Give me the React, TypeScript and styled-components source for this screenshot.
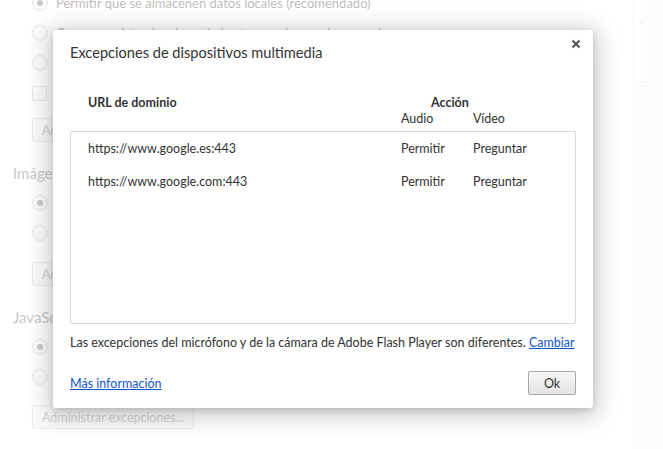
import React from "react";
import styled, { createGlobalStyle } from "styled-components";

const GlobalStyle = createGlobalStyle`
  html, body {
    margin: 0;
    padding: 0;
    width: 663px;
    height: 449px;
    overflow: hidden;
    background: #fff;
    font-family: "Lato", "Open Sans", "DejaVu Sans", sans-serif;
  }
`;

const Page = styled.div`
  display: flex;
  width: 663px;
  height: 449px;
  position: relative;
  overflow: hidden;
`;

const Settings = styled.div`
  flex: 1;
  padding: 0 0 0 13px;
  display: flex;
  flex-direction: column;
  color: #303030;
  font-size: 13px;
  margin-top: -12px;
`;

const Section = styled.div`
  display: flex;
  flex-direction: column;
`;

const SectionTitle = styled.div`
  font-size: 15px;
  color: #555;
  height: 30px;
  line-height: 30px;
  margin-top: 16px;
`;

const Option = styled.div`
  display: flex;
  align-items: center;
  gap: 8px;
  height: 30px;
  flex: none;
  padding-left: 19px;
`;

const Radio = styled.span<{ $checked?: boolean }>`
  width: 14px;
  height: 14px;
  border-radius: 50%;
  border: 1px solid #b5b5b5;
  background: linear-gradient(#fff, #ededed);
  display: flex;
  align-items: center;
  justify-content: center;
  &::after {
    content: "";
    width: 6px;
    height: 6px;
    border-radius: 50%;
    background: ${(p) => (p.$checked ? "#555" : "transparent")};
  }
`;

const Check = styled.span`
  width: 13px;
  height: 13px;
  border-radius: 2px;
  border: 1px solid #b5b5b5;
  background: linear-gradient(#fff, #ededed);
`;

const PageButton = styled.button<{ $gap: number }>`
  align-self: flex-start;
  margin: ${(p) => p.$gap}px 0 0 19px;
  height: 24px;
  padding: 0 9px;
  border: 1px solid #c8c8c8;
  border-radius: 2px;
  background: linear-gradient(#fafafa, #ededed);
  font-family: inherit;
  font-size: 12.5px;
  color: #777;
`;

const ScrollTrack = styled.div`
  width: 14px;
  border-left: 1px solid #e0e0e0;
  border-right: 1px solid #e6e6e6;
  background: #f4f4f4;
  display: flex;
  flex-direction: column;
`;

const ScrollThumb = styled.div`
  height: 82px;
  background: #fbfbfb;
  border-bottom: 1px solid #dcdcdc;
  display: flex;
  justify-content: center;
  padding-top: 17px;
  box-sizing: border-box;
  color: #bbb;
  font-size: 9px;
  line-height: 1;
`;

const Gutter = styled.div`
  width: 14px;
  background: #f2f2f2;
`;

const Overlay = styled.div`
  position: absolute;
  inset: 0;
  background: rgba(255, 255, 255, 0.68);
  display: flex;
  align-items: flex-start;
  padding: 30px 0 0 53px;
`;

const Dialog = styled.div`
  width: 540px;
  height: 378px;
  box-sizing: border-box;
  background: #fff;
  border-radius: 3px;
  box-shadow: 0 4px 23px 5px rgba(0, 0, 0, 0.2), 0 2px 6px rgba(0, 0, 0, 0.15);
  padding: 0 17px;
  display: flex;
  flex-direction: column;
  color: #333;
`;

const Header = styled.div`
  display: flex;
  align-items: center;
  justify-content: space-between;
  height: 44px;
  flex: none;
`;

const Title = styled.h1`
  margin: 0;
  font-size: 14.6px;
  font-weight: 400;
  color: #333;
`;

const Close = styled.button`
  border: 0;
  background: none;
  padding: 0;
  margin: -16px -8px 0 0;
  width: 16px;
  height: 16px;
  display: flex;
  align-items: center;
  justify-content: center;
`;

const Columns = `
  display: grid;
  grid-template-columns: 313px 72px 1fr;
`;

const ColumnHeads = styled.div`
  ${Columns}
  grid-template-rows: 16px 16px;
  line-height: 16px;
  padding: 21px 0 0 18px;
  height: 57px;
  flex: none;
  box-sizing: border-box;
  font-size: 12.5px;
`;

const HeadStrong = styled.div`
  font-weight: 700;
  color: #333;
`;

const ActionTitle = styled.div`
  grid-column: 2 / 4;
  font-weight: 700;
  padding-left: 30px;
`;

const SubHead = styled.div<{ $col: number }>`
  grid-row: 2;
  grid-column: ${(p) => p.$col};
  color: #333;
`;

const List = styled.div`
  flex: none;
  height: 193px;
  box-sizing: border-box;
  border: 1px solid #d9d9d9;
  border-radius: 2px;
`;

const Row = styled.div`
  ${Columns}
  align-items: center;
  height: 33px;
  padding-left: 17px;
  font-size: 12.5px;
  color: #333;
`;

const Note = styled.p`
  margin: 11px 0 0;
  line-height: 16px;
  font-size: 12.5px;
  color: #333;
  white-space: nowrap;
`;

const Link = styled.a`
  color: #15c;
  text-decoration: underline;
  cursor: pointer;
`;

const Footer = styled.div`
  display: flex;
  align-items: center;
  justify-content: space-between;
  margin-top: 20px;
  font-size: 12.5px;
`;

const OkButton = styled.button`
  width: 48px;
  height: 24px;
  border: 1px solid #a8a8a8;
  border-radius: 2px;
  background: linear-gradient(#f6f6f6, #e4e4e4);
  font-family: inherit;
  font-size: 12.5px;
  color: #333;
  padding: 0;
`;

const rows = [
  { url: "https://www.google.es:443", audio: "Permitir", video: "Preguntar" },
  { url: "https://www.google.com:443", audio: "Permitir", video: "Preguntar" },
];

export default function App() {
  return (
    <>
      <GlobalStyle />
      <Page>
        <Settings>
          <Section>
            <Option>
              <Radio $checked />
              <span>Permitir que se almacenen datos locales (recomendado)</span>
            </Option>
            <Option>
              <Radio />
              <span>Conservar datos locales solo hasta que cierres el navegador</span>
            </Option>
            <Option>
              <Radio />
              <span>No permitir que se almacenen datos de sitios</span>
            </Option>
            <Option>
              <Check />
              <span>Bloquear datos de sitios y cookies de terceros</span>
            </Option>
            <PageButton $gap={10}>Administrar excepciones...</PageButton>
          </Section>
          <Section>
            <SectionTitle>Imágenes</SectionTitle>
            <Option>
              <Radio $checked />
              <span>Mostrar todas las imágenes (recomendado)</span>
            </Option>
            <Option>
              <Radio />
              <span>No mostrar ninguna imagen</span>
            </Option>
            <PageButton $gap={14}>Administrar excepciones...</PageButton>
          </Section>
          <Section>
            <SectionTitle>JavaScript</SectionTitle>
            <Option>
              <Radio $checked />
              <span>Permitir que todos los sitios ejecuten JavaScript</span>
            </Option>
            <Option>
              <Radio />
              <span>No permitir que ningún sitio ejecute JavaScript</span>
            </Option>
            <PageButton $gap={13}>Administrar excepciones...</PageButton>
          </Section>
        </Settings>
        <ScrollTrack>
          <ScrollThumb>≡</ScrollThumb>
        </ScrollTrack>
        <Gutter />
        <Overlay>
          <Dialog>
            <Header>
              <Title>Excepciones de dispositivos multimedia</Title>
              <Close aria-label="Cerrar">
                <svg width="10" height="10" viewBox="0 0 10 10">
                  <path d="M1.5 1.5 L8.5 8.5 M8.5 1.5 L1.5 8.5" stroke="#555" strokeWidth="2.2" />
                </svg>
              </Close>
            </Header>
            <ColumnHeads>
              <HeadStrong>URL de dominio</HeadStrong>
              <ActionTitle>Acción</ActionTitle>
              <SubHead $col={2}>Audio</SubHead>
              <SubHead $col={3}>Vídeo</SubHead>
            </ColumnHeads>
            <List>
              {rows.map((r) => (
                <Row key={r.url}>
                  <span>{r.url}</span>
                  <span>{r.audio}</span>
                  <span>{r.video}</span>
                </Row>
              ))}
            </List>
            <Note>
              Las excepciones del micrófono y de la cámara de Adobe Flash Player son diferentes.{" "}
              <Link>Cambiar</Link>
            </Note>
            <Footer>
              <Link>Más información</Link>
              <OkButton>Ok</OkButton>
            </Footer>
          </Dialog>
        </Overlay>
      </Page>
    </>
  );
}
